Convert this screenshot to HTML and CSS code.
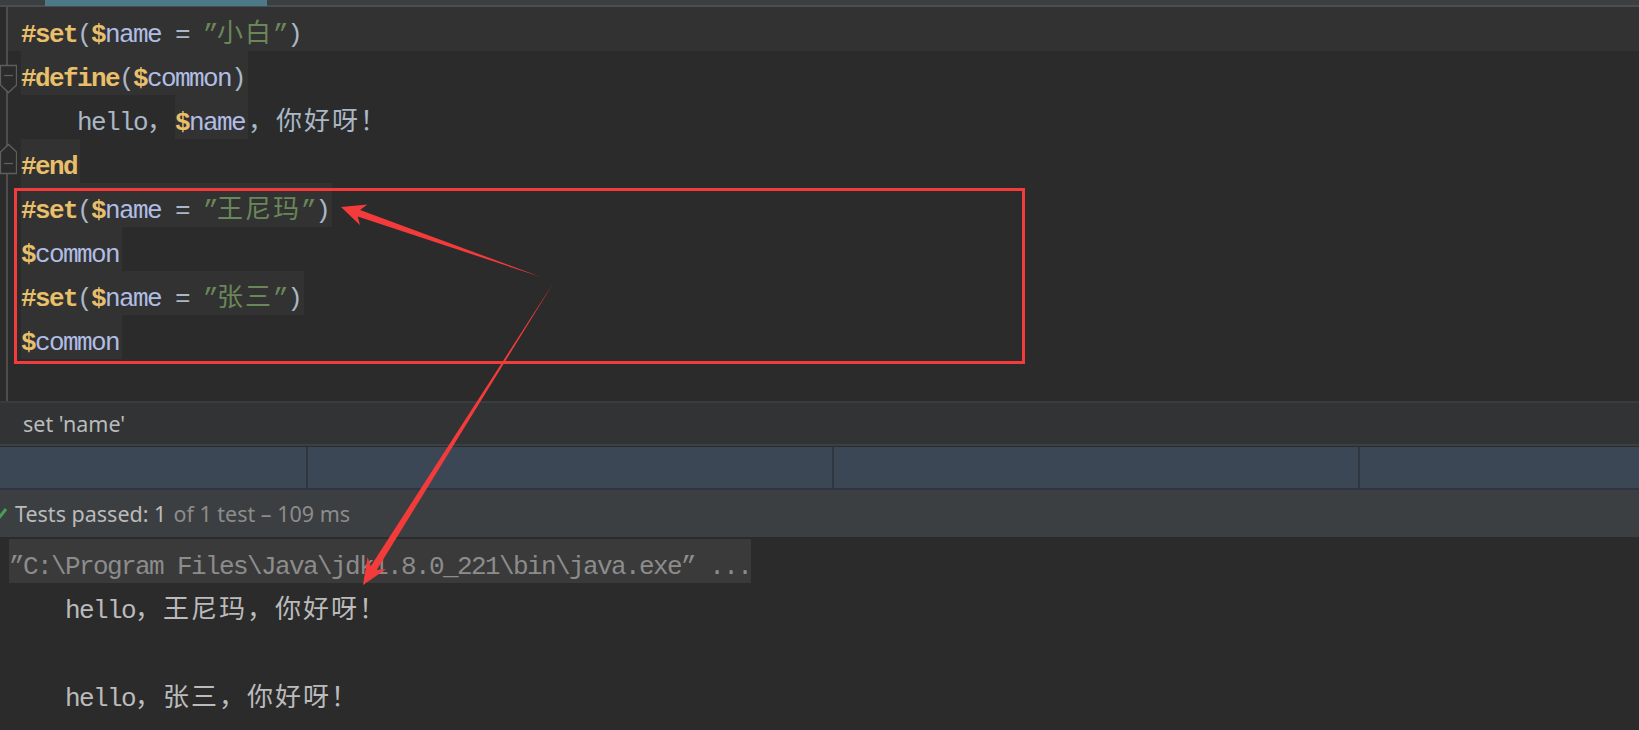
FILE: index.html
```html
<!DOCTYPE html>
<html lang="zh-CN">
<head>
    <meta charset="UTF-8">
    <title>Velocity define test</title>
    <link rel="stylesheet" href="styles.css">
</head>
<body>
    <div class="tabs"><div class="tab-on"></div></div>

    <div class="editor">
        <div class="row caret">
            <div class="gut"></div>
            <div class="code"><span class="kw">#set</span><span class="pn">(</span><span class="dl">$</span><span class="id">name</span><span class="pn"> = </span><span class="str">”<span class="zh">小白</span>”</span><span class="pn">)</span></div>
        </div>
        <div class="row">
            <div class="gut">
                <svg class="fold" width="17" height="44" viewBox="0 0 17 44"><path d="M0.5 14.5H16.5V34L8.5 41.5L0.5 34Z"/><path d="M4 24.5H13"/></svg>
            </div>
            <div class="code"><span class="chunk"><span class="kw">#define</span><span class="pn">(</span><span class="dl">$</span><span class="id">common</span><span class="pn">)</span></span></div>
        </div>
        <div class="row">
            <div class="gut"></div>
            <div class="code">    <span class="pn">hello<span class="zh">，</span></span><span class="chunk"><span class="dl">$</span><span class="id">name</span></span><span class="pn zh">，你好呀！</span></div>
        </div>
        <div class="row">
            <div class="gut">
                <svg class="fold" width="17" height="44" viewBox="0 0 17 44"><path d="M0.5 34.5H16.5V13L8.5 5.5L0.5 13Z"/><path d="M4 24.5H13"/></svg>
            </div>
            <div class="code"><span class="chunk"><span class="kw">#end</span></span></div>
        </div>
        <div class="row">
            <div class="gut"></div>
            <div class="code"><span class="chunk"><span class="kw">#set</span><span class="pn">(</span><span class="dl">$</span><span class="id">name</span><span class="pn"> = </span><span class="str">”<span class="zh">王尼玛</span>”</span><span class="pn">)</span></span></div>
        </div>
        <div class="row">
            <div class="gut"></div>
            <div class="code"><span class="chunk"><span class="dl">$</span><span class="id">common</span></span></div>
        </div>
        <div class="row">
            <div class="gut"></div>
            <div class="code"><span class="chunk"><span class="kw">#set</span><span class="pn">(</span><span class="dl">$</span><span class="id">name</span><span class="pn"> = </span><span class="str">”<span class="zh">张三</span>”</span><span class="pn">)</span></span></div>
        </div>
        <div class="row">
            <div class="gut"></div>
            <div class="code"><span class="chunk"><span class="dl">$</span><span class="id">common</span></span></div>
        </div>
        <div class="row filler">
            <div class="gut"></div>
        </div>
    </div>

    <div class="crumb">set 'name'</div>

    <div class="toolbar">
        <div class="cell"></div>
        <div class="cell"></div>
        <div class="cell"></div>
        <div class="cell"></div>
    </div>

    <div class="status">
        <svg class="check" width="14" height="16" viewBox="0 0 14 16"><path d="M1 9L5 13L13 3"/></svg>
        <span class="passed">Tests passed: 1</span>
        <span class="muted">of 1 test – 109 ms</span>
    </div>

    <div class="console">
        <div class="out"><span class="cmd">”C:\Program Files\Java\jdk1.8.0_221\bin\java.exe” ...</span></div>
        <div class="out">    hello<span class="zh">，王尼玛，你好呀！</span></div>
        <div class="out"></div>
        <div class="out">    hello<span class="zh">，张三，你好呀！</span></div>
    </div>

    <!-- screenshot annotation: red frame and two arrows -->
    <svg class="marks" width="1639" height="730" viewBox="0 0 1639 730">
        <rect x="15.5" y="189.5" width="1008" height="173" fill="none" stroke="#f33b3b" stroke-width="3"/>
        <polygon fill="#f33b3b" points="541,277 360.1,210 367.3,204.5 341,207 360.1,225.3 357.7,216.6"/>
        <polygon fill="#f33b3b" points="554,282 376.7,570 386.2,568.9 363,585 367.6,557.1 370.7,566.2"/>
    </svg>
</body>
</html>
```

FILE: styles.css
```css
html, body {
    margin: 0;
    width: 1639px;
    height: 730px;
    overflow: hidden;
}
body {
    position: relative;
    background: #2b2b2b;
    font-family: "Noto Sans", "Open Sans", sans-serif;
}

.tabs {
    height: 7px;
    background: linear-gradient(#3c3f41 0 5px, #4b4e51 5px 7px);
}
.tab-on {
    margin-left: 45px;
    width: 222px;
    height: 6px;
    background: #4c7a88;
}

.editor {
    font-family: "Liberation Mono", "Noto Sans CJK SC", monospace;
    font-size: 26px;
    letter-spacing: -1.6px;
}
.row {
    display: flex;
    height: 44px;
}
.row.filler { height: 42px; }
.gut {
    flex: none;
    width: 21px;
    background: linear-gradient(90deg, transparent 6px, #4e4e4e 6px 8px, transparent 8px);
}
.caret { background: #323232; }
.caret .gut {
    background: linear-gradient(90deg, #2b2b2b 6px, #4e4e4e 6px 8px, #323232 8px);
}
.fold { display: block; }
.fold path {
    fill: #2b2b2b;
    stroke: #5e5e5e;
    stroke-width: 1.3;
}
.code {
    height: 44px;
    line-height: 56px;
    white-space: pre;
    overflow: hidden;
}
.chunk {
    display: inline-block;
    vertical-align: top;
    height: 44px;
    padding-right: 3px;
    background: #323232;
}
.zh {
    font-family: "Noto Sans CJK SC", sans-serif;
    letter-spacing: 2px;
    line-height: 30px;
}
.kw { color: #e8bf6a; font-weight: bold; }
.dl { color: #e8bf6a; font-weight: bold; }
.id { color: #b0bde4; }
.pn { color: #a9b7c6; }
.str { color: #6a8759; }

.crumb {
    height: 41px;
    line-height: 41px;
    padding-left: 23px;
    border-top: 2px solid #393b3d;
    border-bottom: 2px solid #3d4043;
    margin-bottom: 1px;
    background: #313335;
    color: #bbbbbb;
    font-size: 21.5px;
}

.toolbar {
    display: grid;
    grid-template-columns: 306px 524px 524px 1fr;
    gap: 2px;
    height: 41px;
    background: #2f3640;
    border-bottom: 2px solid #2e3540;
}
.cell { background: #3b4755; }

.status {
    display: flex;
    align-items: center;
    gap: 6px;
    height: 47px;
    background: #3c3f41;
    font-size: 21.5px;
}
.check {
    margin-left: -7px;
    margin-right: 2px;
}
.check path {
    fill: none;
    stroke: #499c54;
    stroke-width: 3;
}
.passed { color: #bbbbbb; }
.muted { color: #8c8c8c; margin-left: 1px; }

.console {
    padding-top: 2px;
    padding-left: 9px;
    font-family: "Liberation Mono", "Noto Sans CJK SC", monospace;
    font-size: 26px;
    letter-spacing: -1.6px;
    color: #bbbbbb;
}
.out {
    height: 44px;
    line-height: 56px;
    white-space: pre;
}
.cmd {
    display: inline-block;
    vertical-align: top;
    height: 44px;
    background: #3a3a3a;
    color: #8c8c8c;
}

.marks {
    position: absolute;
    top: 0;
    left: 0;
    pointer-events: none;
}
```
